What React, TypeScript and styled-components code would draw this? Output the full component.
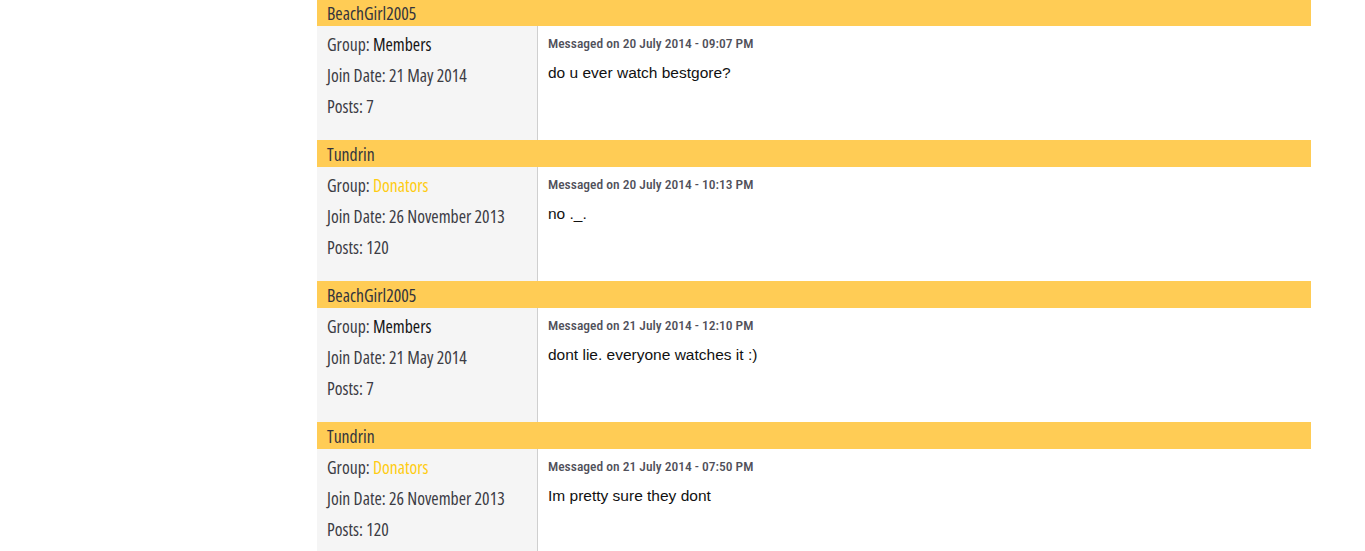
import React from "react";
import styled, { createGlobalStyle } from "styled-components";

const Global = createGlobalStyle`
  html, body { margin: 0; padding: 0; background: #ffffff; }
  body { font-family: "Open Sans", "Liberation Sans", sans-serif; }
`;

const Page = styled.div`
  display: flex;
  padding-left: 317px;
`;

const Thread = styled.div`
  width: 994px;
  display: flex;
  flex-direction: column;
  margin-top: -1px;
`;

const Post = styled.section`
  display: flex;
  flex-direction: column;
`;

const Header = styled.div`
  height: 27px;
  background: #ffcc55;
  color: #34343c;
  font-family: "Open Sans", sans-serif;
  font-stretch: 75%;
  font-weight: 500;
  font-size: 17.7px;
  line-height: 28px;
  padding-left: 10px;
`;

const Body = styled.div`
  display: flex;
  height: 114px;
`;

const Info = styled.div`
  width: 221px;
  flex-shrink: 0;
  background: #f5f5f5;
  border-right: 1px solid #cfcfcf;
  padding: 3px 0 0 10px;
  box-sizing: border-box;
  color: #3c3c44;
  font-family: "Open Sans", sans-serif;
  font-stretch: 75%;
  font-weight: 500;
  font-size: 17.7px;
`;

const InfoRow = styled.div`
  height: 31px;
  line-height: 31px;
`;

const Group = styled.span<{ $donor?: boolean }>`
  color: ${(p) => (p.$donor ? "#ffcc11" : "#141414")};
`;

const Content = styled.div`
  flex: 1;
  padding: 7px 0 0 10px;
`;

const Meta = styled.div`
  font-family: "Roboto Condensed", "Open Sans", sans-serif;
  font-weight: 500;
  font-size: 13.5px;
  color: #50505a;
  line-height: 20px;
`;

const Text = styled.div`
  font-family: "Liberation Sans", Arial, sans-serif;
  font-size: 15.5px;
  color: #111111;
  margin-top: 10px;
  line-height: 20px;
`;

type P = { user: string; donor: boolean; join: string; posts: number; date: string; text: string };

const posts: P[] = [
  { user: "BeachGirl2005", donor: false, join: "21 May 2014", posts: 7, date: "20 July 2014 - 09:07 PM", text: "do u ever watch bestgore?" },
  { user: "Tundrin", donor: true, join: "26 November 2013", posts: 120, date: "20 July 2014 - 10:13 PM", text: "no ._." },
  { user: "BeachGirl2005", donor: false, join: "21 May 2014", posts: 7, date: "21 July 2014 - 12:10 PM", text: "dont lie. everyone watches it :)" },
  { user: "Tundrin", donor: true, join: "26 November 2013", posts: 120, date: "21 July 2014 - 07:50 PM", text: "Im pretty sure they dont" },
];

export default function App() {
  return (
    <Page>
      <Global />
      <Thread>
        {posts.map((p, i) => (
          <Post key={i}>
            <Header>{p.user}</Header>
            <Body>
              <Info>
                <InfoRow>
                  Group: <Group $donor={p.donor}>{p.donor ? "Donators" : "Members"}</Group>
                </InfoRow>
                <InfoRow>Join Date: {p.join}</InfoRow>
                <InfoRow>Posts: {p.posts}</InfoRow>
              </Info>
              <Content>
                <Meta>Messaged on {p.date}</Meta>
                <Text>{p.text}</Text>
              </Content>
            </Body>
          </Post>
        ))}
      </Thread>
    </Page>
  );
}
